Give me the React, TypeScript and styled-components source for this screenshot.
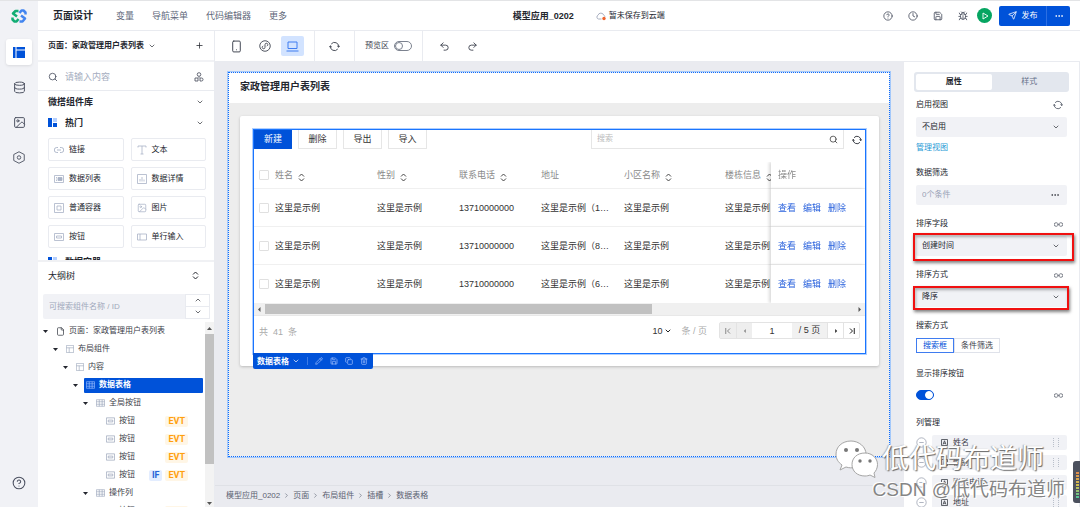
import React from 'react';
import styled, { createGlobalStyle, css } from 'styled-components';
import {
  Bug, ChevronDown, ChevronUp, CircleHelp, Clock, Copy, Database, Ellipsis, File,
  Image, Pencil, Plus, Redo2, Save, Search, Send, Smartphone, Trash2, Undo2,
} from 'lucide-react';

const color = {
  blue: '#0052d9',
  ink: '#23262e',
  text: '#3c4049',
  line: '#e9ebf0',
  field: '#f1f2f6',
  canvas: '#eaebf0',
};

const GlobalStyle = createGlobalStyle`
  *, *::before, *::after { box-sizing: border-box; }
  body {
    margin: 0;
    font-family: "Liberation Sans", "Noto Sans CJK SC", sans-serif;
    font-size: 8px;
    line-height: 12px;
    color: ${color.ink};
  }
  button, input, select { font: inherit; color: inherit; margin: 0; padding: 0; }
  button { border: 0; background: none; cursor: pointer; }
  svg { display: block; flex: none; }
  a { text-decoration: none; }
`;

/* ---------- shell ---------- */

const Shell = styled.div`
  position: relative;
  display: flex;
  height: 100vh;
  overflow: hidden;
  background: #fff;
  border-top: 1px solid #e3e4e6;
`;

const Rail = styled.nav`
  flex: none;
  width: 38px;
  display: flex;
  flex-direction: column;
  align-items: center;
  gap: 9px;
  padding: 6px 0 11px;
  background: ${color.field};
`;

const Logo = styled.div`
  height: 18px;
  margin-bottom: 5px;
  display: flex;
  align-items: center;
`;

const RailButton = styled.button<{ $active?: boolean; $last?: boolean }>`
  width: 26px;
  height: 26px;
  display: grid;
  place-items: center;
  border-radius: 3px;
  color: #4b5060;
  ${(p) => p.$active && css`background: #fff; box-shadow: 0 1px 3px rgba(0, 0, 0, 0.1); color: ${color.blue};`}
  ${(p) => p.$last && css`margin-top: auto;`}
`;

const Main = styled.div`
  flex: 1;
  min-width: 0;
  display: flex;
  flex-direction: column;
`;

const Row = styled.div`
  flex: 1;
  min-height: 0;
  display: flex;
`;

const Column = styled.div`
  flex: 1;
  min-width: 0;
  display: flex;
  flex-direction: column;
`;

/* ---------- header ---------- */

const Header = styled.header`
  flex: none;
  height: 30px;
  display: grid;
  grid-template-columns: 8fr auto 7fr;
  align-items: center;
  border-bottom: 1px solid ${color.line};
  white-space: nowrap;
`;

const Menu = styled.nav`
  display: flex;
  align-items: center;
  gap: 18px;
  padding-left: 15px;
  font-size: 9px;
`;

const MenuTitle = styled.h1`
  margin: 0 5px 0 0;
  font-size: 10px;
  line-height: 12px;
`;

const MenuLink = styled.a`
  color: #5d6678;
`;

const AppState = styled.div`
  display: flex;
  align-items: center;
  gap: 3px;
`;

const AppName = styled.strong`
  margin-right: 19px;
  font-size: 9px;
`;

const HeaderTools = styled.div`
  display: flex;
  align-items: center;
  justify-content: flex-end;
  padding-right: 10px;
  color: #4b5060;
`;

const ToolButton = styled.button`
  width: 25px;
  height: 20px;
  display: grid;
  place-items: center;
`;

const PlayButton = styled.button`
  width: 15px;
  height: 15px;
  margin: 0 7px 0 2px;
  display: grid;
  place-items: center;
  border-radius: 50%;
  background: #06a561;
`;

const Publish = styled.div`
  display: flex;
  height: 20px;
  border-radius: 2px;
  overflow: hidden;
  background: ${color.blue};
  color: #fff;
`;

const PublishButton = styled.button`
  width: 48px;
  display: flex;
  align-items: center;
  justify-content: center;
  gap: 5px;
  border-right: 1px solid #2c6fe2;
`;

const PublishMore = styled.button`
  width: 23px;
  display: grid;
  place-items: center;
`;

/* ---------- left panel ---------- */

const LeftPanel = styled.aside`
  flex: none;
  width: 177px;
  display: flex;
  flex-direction: column;
  border-right: 1px solid ${color.line};
`;

const PageBar = styled.div`
  flex: none;
  height: 31px;
  display: flex;
  align-items: center;
  gap: 4px;
  padding: 0 10px;
  border-bottom: 2px solid #f1f2f5;
  font-weight: bold;

  button { margin-left: auto; }
`;

const SearchBar = styled.label`
  flex: none;
  height: 29px;
  display: flex;
  align-items: center;
  gap: 7px;
  padding: 2px 10px 0;
  border-bottom: 1px solid ${color.line};
  color: #4b5060;

  input {
    flex: 1;
    min-width: 0;
    border: 0;
    outline: 0;
    font-size: 9px;
    background: none;
  }
  input::placeholder { color: #a5adc0; }
`;

const Library = styled.section`
  flex: none;
  height: 171px;
  overflow: hidden;
  border-bottom: 2px solid #f0f1f4;
`;

const GroupHead = styled.button`
  width: 100%;
  height: 21px;
  display: flex;
  align-items: center;
  gap: 8px;
  padding: 0 10px;
  font-size: 9px;
  font-weight: bold;

  > :last-child { margin-left: auto; }
`;

const WidgetGrid = styled.div`
  display: grid;
  grid-template-columns: 1fr 1fr;
  gap: 6px 7px;
  padding: 5px 8px 3px 10px;
`;

const Widget = styled.button`
  height: 23px;
  display: flex;
  align-items: center;
  gap: 5px;
  padding: 0 6px 0 5px;
  border: 1px solid ${color.line};
  border-radius: 2px;
  color: ${color.ink};
  white-space: nowrap;

  svg { color: #a9b3c6; }
`;

const Outline = styled.section`
  flex: 1;
  min-height: 0;
  display: flex;
  flex-direction: column;
`;

const OutlineHead = styled.div`
  flex: none;
  height: 32px;
  display: flex;
  align-items: center;
  justify-content: space-between;
  padding: 0 15px 5px 10px;
  font-size: 9px;
`;

const OutlineSearch = styled.div`
  flex: none;
  display: flex;
  height: 25px;
  margin: 0 4px 3px 5px;

  input {
    flex: 1;
    min-width: 0;
    padding: 0 6px;
    border: 0;
    border-radius: 2px 0 0 2px;
    outline: 0;
    background: ${color.field};
  }
  input::placeholder { color: #a0a8bb; }
`;

const Stepper = styled.div`
  width: 25px;
  display: grid;
  grid-template-rows: 1fr 1fr;

  button {
    display: grid;
    place-items: center;
    border: 1px solid ${color.line};
  }
  button + button { border-top: 0; }
`;

const TreeArea = styled.div`
  flex: 1;
  min-height: 0;
  display: flex;
`;

const Tree = styled.ul`
  flex: 1;
  min-width: 0;
  margin: 0;
  padding: 0 2px 0 5px;
  overflow: hidden;
  list-style: none;
`;

const TreeRow = styled.li<{ $level: number }>`
  height: 18px;
  display: flex;
  align-items: center;
  padding-left: ${(p) => p.$level * 10}px;
`;

const Caret = styled.span<{ $hidden?: boolean }>`
  width: 11px;
  display: flex;
  visibility: ${(p) => (p.$hidden ? 'hidden' : 'visible')};
`;

const TreeLabel = styled.span<{ $selected?: boolean }>`
  flex: 1;
  height: 15px;
  display: flex;
  align-items: center;
  gap: 4px;
  padding: 0 15px 0 2px;
  color: ${color.text};
  white-space: nowrap;

  svg { color: #9aa5ba; }
  ${(p) => p.$selected && css`
    background: ${color.blue};
    color: #fff;
    font-weight: bold;
    border-radius: 1px;
    svg { color: #9dc0ff; }
  `}
`;

const Badges = styled.span`
  display: flex;
  gap: 3px;
  margin-left: auto;
`;

const Badge = styled.span<{ $tone: 'evt' | 'if' }>`
  height: 11px;
  line-height: 11px;
  padding: 0 3px;
  border-radius: 2px;
  font-family: Roboto, "Liberation Sans", sans-serif;
  font-size: 9px;
  font-weight: bold;
  color: ${(p) => (p.$tone === 'evt' ? '#ff9f0f' : '#2463d8')};
  background: ${(p) => (p.$tone === 'evt' ? '#fff6e6' : '#e3edff')};
`;

const VerticalBar = styled.div`
  flex: none;
  width: 9px;
  display: flex;
  flex-direction: column;
  align-items: center;
  justify-content: space-between;
  padding: 4px 0 1px;
  background: #f3f3f3;
  color: #555;
`;

const VerticalThumb = styled.div`
  width: 100%;
  height: 72%;
  margin-bottom: auto;
  margin-top: 3px;
  background: #c1c1c1;
`;

/* ---------- canvas toolbar ---------- */

const Toolbar = styled.div`
  flex: none;
  height: 31px;
  display: flex;
  border-bottom: 1px solid ${color.line};
`;

const ToolGroup = styled.div<{ $tight?: boolean; $last?: boolean }>`
  display: flex;
  align-items: center;
  gap: 5px;
  padding: 0 ${(p) => (p.$tight ? 8 : 10)}px;
  border-right: ${(p) => (p.$last ? '0' : `1px solid ${color.line}`)};
  color: #3f4450;
`;

const DeviceButton = styled.button<{ $active?: boolean }>`
  width: 23px;
  height: 20px;
  display: grid;
  place-items: center;
  border-radius: 2px;
  background: ${(p) => (p.$active ? '#d2e3ff' : 'transparent')};
  color: ${(p) => (p.$active ? '#3f7cf0' : 'inherit')};
`;

const SwitchLabel = styled.label`
  display: flex;
  align-items: center;
  gap: 5px;
`;

const Switch = styled.input`
  appearance: none;
  width: 18px;
  height: 10px;
  display: flex;
  align-items: center;
  border-radius: 5px;
  background: #fff;
  border: 1px solid #7c828f;

  &::before {
    content: '';
    width: 8px;
    height: 8px;
    border: 1px solid #7c828f;
    border-radius: 50%;
    background: #fff;
  }
  &:checked { background: ${color.blue}; border-color: ${color.blue}; justify-content: flex-end; }
  &:checked::before { border-color: #fff; }
`;

/* ---------- canvas ---------- */

const CanvasArea = styled.main`
  flex: 1;
  min-width: 0;
  display: flex;
  flex-direction: column;
  background: ${color.canvas};
`;

const Stage = styled.div`
  flex: 1;
  min-height: 0;
  display: flex;
  padding: 10px 14px 28px 13px;
`;

const PageFrame = styled.section`
  flex: 1;
  min-width: 0;
  border: 1px dotted #0a6cff;
  outline: 1px solid #a3c8fb;
  background: #ededed;
  background-clip: padding-box;
`;

const PageTitle = styled.h2`
  margin: 0;
  padding: 0 11px 2px;
  font-size: 10px;
  line-height: 28px;
  background: #fff;
`;

const Card = styled.div`
  margin: 13px 10px 0 11px;
  padding: 13px 13px 12px;
  border-radius: 2px;
  background: #fff;
  box-shadow: 0 1px 3px rgba(0, 0, 0, 0.22);
`;

const TableBlock = styled.div`
  position: relative;
  border: 1px solid #1a75ff;
  box-shadow: 0 0 0 1px rgba(26, 117, 255, 0.35);
  font-size: 9px;
`;

const TableActions = styled.div`
  display: flex;
  height: 19px;
  gap: 6px;
  margin-bottom: 13px;
`;

const ActionButton = styled.button<{ $primary?: boolean }>`
  width: 39px;
  border: 1px solid #e6e6e6;
  border-top: 0;
  border-radius: 0 0 1px 1px;
  color: #333;
  ${(p) => p.$primary && css`width: 38px; background: ${color.blue}; border-color: ${color.blue}; color: #fff;`}
`;

const TableSearch = styled.label`
  width: 253px;
  margin-left: auto;
  display: flex;
  align-items: center;
  padding: 0 5px;
  border: 1px solid #e6e6e6;
  border-top: 0;

  input {
    flex: 1;
    min-width: 0;
    border: 0;
    outline: 0;
    font-size: 8px;
  }
  input::placeholder { color: #bbb; }
`;

const RefreshButton = styled.button`
  width: 14px;
  margin: 0 1px 0 -6px;
  display: grid;
  place-items: center;

  && { margin-left: 0; }
`;

const TableScroller = styled.div`
  overflow: hidden;
`;

const DataTable = styled.table`
  width: 928px;
  table-layout: fixed;
  border-collapse: separate;
  border-spacing: 0;

  th, td {
    padding: 0;
    text-align: left;
    font-weight: normal;
    white-space: nowrap;
    border-bottom: 1px solid #f0f0f0;
    background: #fff;
  }
  th { height: 27px; color: #8a8a8a; }
  td { height: 38px; color: #333; }
  tbody tr:last-child td { border-bottom: 0; }
  th:last-child, td:last-child {
    position: sticky;
    right: 0;
    padding-left: 7px;
    box-shadow: -2px 0 3px rgba(0, 0, 0, 0.14);
  }
`;

const SortHead = styled.span`
  display: flex;
  align-items: center;
  gap: 5px;

  svg { margin-top: 5px; color: #444; }
`;

const Check = styled.input`
  appearance: none;
  display: block;
  width: 10px;
  height: 10px;
  && { margin-left: 5px; }
  border: 1px solid #e0e0e0;
  border-radius: 1px;
`;

const RowLinks = styled.span`
  display: flex;
  gap: 7px;

  a { color: #2b63dd; }
`;

const HorizontalBar = styled.div`
  height: 13px;
  display: flex;
  align-items: center;
  justify-content: space-between;
  padding: 0 3px;
  background: #f0f0f0;
  border-bottom: 1px solid #e8e8e8;
  color: #555;
`;

const HorizontalThumb = styled.div`
  width: 64%;
  height: 10px;
  margin-right: auto;
  margin-left: 3px;
  background: #c1c1c1;
`;

const TableFooter = styled.div`
  height: 37px;
  display: flex;
  align-items: flex-start;
  padding: 6px 5px 0;
  color: #aaa;
`;

const Total = styled.span`
  margin-right: auto;
  padding-top: 4px;
  white-space: pre;
`;

const PageSize = styled.label`
  display: flex;
  align-items: center;
  height: 17px;
  margin-right: 12px;

  select {
    appearance: none;
    border: 0;
    width: 12px;
    background: none;
    color: #333;
  }
  svg { color: #222; margin-right: 9px; }
`;

const Pager = styled.div`
  display: flex;
  height: 17px;
  border: 1px solid #e3e3e3;
  border-radius: 2px;
  color: #333;

  input {
    width: 40px;
    border: 0;
    text-align: center;
  }
  span {
    width: 35px;
    line-height: 15px;
    text-align: center;
    background: #f1f1f1;
  }
`;

const PagerButton = styled.button`
  width: 16px;
  display: grid;
  place-items: center;
  border-left: 1px solid #e3e3e3;
  color: #222;

  &:first-child { border-left: 0; }
  &:disabled { background: #eee; color: #888; }
`;

const SelectionTag = styled.div`
  position: absolute;
  left: -1px;
  top: 100%;
  height: 16px;
  display: flex;
  align-items: center;
  gap: 7px;
  padding: 0 5px 0 4px;
  border-radius: 0 0 2px 2px;
  background: ${color.blue};
  color: #a9c6ff;
  font-size: 8px;
  white-space: nowrap;

  strong {
    display: flex;
    align-items: center;
    gap: 3px;
    padding-right: 7px;
    border-right: 1px solid #3c7be6;
    line-height: 7px;
    color: #fff;
  }
`;

const Breadcrumb = styled.nav`
  flex: none;
  height: 22px;
  display: flex;
  align-items: center;
  gap: 3px;
  padding: 0 11px 2px;
  border-top: 1px solid #dfe1e6;

  a { color: #5a6170; }
  svg { transform: rotate(-90deg); color: #5a6170; }
`;

/* ---------- right panel ---------- */

const Props = styled.aside`
  flex: none;
  width: 176px;
  overflow: hidden;
  padding: 10px 12px 0;
  background: #fff;
  border-right: 1px solid ${color.line};
`;

const Tabs = styled.div`
  display: grid;
  grid-template-columns: 1fr 1fr;
  height: 20px;
  margin: 0 -2px 7px;
  padding: 2px;
  border-radius: 3px;
  background: #e3e7ee;
`;

const Tab = styled.button<{ $active?: boolean }>`
  border-radius: 2px;
  color: ${(p) => (p.$active ? color.ink : '#66708a')};
  font-weight: ${(p) => (p.$active ? 'bold' : 'normal')};
  background: ${(p) => (p.$active ? '#fff' : 'transparent')};
`;

const Field = styled.div`
  position: relative;
  margin-bottom: 13px;
`;

const FieldHead = styled.div`
  height: 12px;
  display: flex;
  align-items: center;
  justify-content: space-between;
  margin-bottom: 6px;
  padding-right: 4px;

  svg { color: #555b68; }
`;

const SelectBox = styled.div`
  display: flex;
  align-items: center;
  height: 20px;
  padding: 0 7px 0 6px;
  border-radius: 2px;
  background: ${color.field};

  select, input {
    appearance: none;
    flex: 1;
    min-width: 0;
    border: 0;
    outline: 0;
    background: none;
  }
  input::placeholder { color: #98a1b5; }
`;

const ManageLink = styled.a`
  display: block;
  margin-top: 5px;
  color: #1f9ad6;
`;

const Marker = styled.div<{ $wide?: boolean }>`
  position: absolute;
  inset: ${(p) => (p.$wide ? '15px -7px -5px -3px' : '17px -2px -3px -3px')};
  border: 2px solid #f01010;
  box-shadow: 1px 2px 3px rgba(0, 0, 0, 0.5), inset 1px 2px 3px rgba(0, 0, 0, 0.3);
  pointer-events: none;
`;

const Segment = styled.div`
  display: flex;
  height: 17px;
  padding-bottom: 2px;
`;

const SegmentButton = styled.button<{ $active?: boolean }>`
  padding: 0 6px;
  border: 1px solid ${(p) => (p.$active ? '#3f7cf0' : '#dfe2ea')};
  color: ${(p) => (p.$active ? color.blue : color.text)};
`;

const SwitchRow = styled.div`
  display: flex;
  align-items: center;
  justify-content: space-between;
  height: 18px;
  padding-right: 4px;
  color: #555b68;
`;

const ColumnItem = styled.div`
  display: flex;
  align-items: center;
  gap: 5px;
  margin-bottom: 5px;
  color: #9aa0b0;
`;

const ColumnName = styled.div`
  flex: 1;
  display: flex;
  align-items: center;
  gap: 5px;
  height: 15px;
  padding: 0 7px 0 9px;
  border-radius: 2px;
  background: ${color.field};
  color: ${color.text};

  svg:last-child { margin-left: auto; }
`;

/* ---------- overlays ---------- */

const SideWidget = styled.div`
  position: absolute;
  right: 0;
  bottom: 4px;
  width: 7px;
  height: 42px;
  padding: 11px 1px 4px 3px;
  border-radius: 3px 0 0 3px;
  background: #4c515e;

  &::before {
    content: '';
    display: block;
    height: 100%;
    background:
      repeating-linear-gradient(transparent 0 2px, #4c515e 2px 3px),
      linear-gradient(#e08a4a, #cfc050, #45c4a0);
  }
`;

const Signature = styled.div`
  position: absolute;
  right: 15px;
  bottom: 5px;
  display: flex;
  flex-direction: column;
  align-items: flex-end;
  color: #fff;
  white-space: nowrap;
  pointer-events: none;
`;

const SignatureName = styled.div`
  display: flex;
  align-items: center;
  gap: 4px;
  margin-right: 21px;
  font-size: 27px;
  line-height: 36px;
  text-shadow: 1px 1px 1px #666, -1px 0 1px #aaa;
`;

const SignatureSite = styled.div`
  font-size: 19px;
  line-height: 24px;
  color: #858585;
  text-shadow: -1px -1px 0 #fff, 1px 1px 0 #fff;
`;

/* ---------- drawings ---------- */

const Glyph = ({ w = 10, h = 10, box = '0 0 20 20', sw = 1.6, children }: {
  w?: number; h?: number; box?: string; sw?: number; children: React.ReactNode;
}) => (
  <svg width={w} height={h} viewBox={box} fill="none" stroke="currentColor" strokeWidth={sw} aria-hidden="true">
    {children}
  </svg>
);

const LogoMark = () => (
  <svg width="16" height="14" viewBox="0 0 32 28" fill="none" strokeLinejoin="round" aria-hidden="true">
    <path d="M15 4 H9 L4 9 L12 15" stroke="#12ad74" strokeWidth="5" />
    <path d="M3 17 V21 L7 25 H11 L15 20" stroke="#12ad74" strokeWidth="5" />
    <path d="M17 8 L21 3 H25 L29 7 V11" stroke="#4285f0" strokeWidth="5" />
    <path d="M20 13 L28 19 L23 25 H17" stroke="#4285f0" strokeWidth="5" />
  </svg>
);

const LinkIcon = () => (
  <Glyph w={10} h={8} box="0 0 20 16" sw={1.8}>
    <path d="M8 3 H5.5 a4.5 4.5 0 0 0 0 10 H8 M12 3 h2.5 a4.5 4.5 0 0 1 0 10 H12 M6 8 h8" />
  </Glyph>
);
const ChainIcon = () => (
  <Glyph w={9} h={5} box="0 0 18 10" sw={1.6}>
    <path d="M8 3.5 A3.6 3.6 0 0 0 5 1.5 H4 a3.5 3.5 0 0 0 0 7 h1 A3.6 3.6 0 0 0 8 6.5 M10 3.5 A3.6 3.6 0 0 1 13 1.5 h1 a3.5 3.5 0 0 1 0 7 h-1 A3.6 3.6 0 0 1 10 6.5 M6.5 5 H11.5" />
  </Glyph>
);
const TextIcon = () => <Glyph><path d="M2 5 V2 H18 V5 M10 2 V18 M7 18 H13" /></Glyph>;
const ListIcon = () => (
  <Glyph w={10} h={8} box="0 0 20 16"><path d="M1 1 H19 V15 H1 Z M4 5 h2 M4 8 h2 M4 11 h2" /><path d="M8 5 h8 v6 h-8 z" fill="currentColor" /></Glyph>
);
const DetailIcon = () => <Glyph><path d="M1 1 H19 V19 H1 Z M6 10 V15 M10 6 V15 M14 11 V15" /></Glyph>;
const BoxIcon = () => <Glyph><path d="M1 1 H19 V19 H1 Z M6 6 H14 V14 H6 Z" /></Glyph>;
const ButtonIcon = ({ w = 10 }: { w?: number }) => (
  <Glyph w={w} h={8} box="0 0 20 16"><path d="M1 1 H19 V15 H1 Z M5 6 H15 V10 H5 Z" /></Glyph>
);
const InputIcon = () => <Glyph w={10} h={8} box="0 0 20 16"><path d="M1 2 H19 V14 H1 Z M6 2 V14" /></Glyph>;
const LayoutIcon = () => <Glyph w={8} h={8}><path d="M1 1 H19 V19 H1 Z M1 7 H19 M8 7 V19" /></Glyph>;
const GridIcon = () => <Glyph w={9} h={8} box="0 0 22 18"><path d="M1 1 H21 V17 H1 Z M1 6 H21 M1 12 H21 M8 1 V17 M15 1 V17" /></Glyph>;
const PanelIcon = () => (
  <svg width="12" height="11" viewBox="0 0 24 22" fill="currentColor" aria-hidden="true">
    <path d="M0 0 H5 V22 H0 Z M7 0 H24 V5 H7 Z M7 7 H24 V22 H7 Z" />
  </svg>
);
const HotIcon = () => (
  <svg width="9" height="9" viewBox="0 0 18 18" aria-hidden="true">
    <path d="M0 0 H8 V18 H0 Z M10 10 H18 V18 H10 Z" fill="#0052d9" />
    <path d="M10 0 H18 V8 H10 Z" fill="#b5d0ff" />
  </svg>
);
const SharesIcon = () => (
  <Glyph sw={1.7}><circle cx="10" cy="5" r="3.6" /><path d="M10 9 V12 M2 18 V12 H8 V18 Z M12 12 h3 a3 3 0 0 1 0 6 h-3 z" /></Glyph>
);
const MiniAppIcon = () => (
  <Glyph w={12} h={12} box="0 0 24 24" sw={1.8}>
    <circle cx="12" cy="12" r="10.5" />
    <path d="M8.5 12 a2.8 2.8 0 1 0 3.5 2.8 V9.2 a2.8 2.8 0 1 1 3.5 2.8" />
  </Glyph>
);
const LaptopIcon = () => <Glyph w={13} h={11} box="0 0 26 22" sw={2}><path d="M4 2 H22 V15 H4 Z M1 20 H25" /></Glyph>;
const SyncIcon = ({ size = 11 }: { size?: number }) => (
  <Glyph w={size} h={size} box="0 0 22 22" sw={1.9}>
    <path d="M4.5 6 A8.3 8.3 0 0 1 19.3 12 M17.5 16 A8.3 8.3 0 0 1 2.7 10" />
    <path d="M0.5 12.5 L2.7 9.5 L5.5 12 M21.5 9.5 L19.3 12.5 L16.5 10" />
  </Glyph>
);
const CloudIcon = () => (
  <svg width="10" height="10" viewBox="0 0 20 20" fill="none" aria-hidden="true">
    <path d="M11 16 H5 a4 4 0 0 1 -1 -7.5 a6 6 0 0 1 11.5 0 a4 4 0 0 1 2.5 3" stroke="#8c96ac" strokeWidth="1.5" />
    <circle cx="16" cy="15" r="3.4" fill="#f0642d" />
  </svg>
);
const SortIcon = () => <Glyph w={7} h={9} box="0 0 14 18" sw={2}><path d="M2 7 L7 2 L12 7 M2 11 L7 16 L12 11" /></Glyph>;
const NutIcon = () => (
  <Glyph w={12} h={13} box="0 0 24 26" sw={1.8}><path d="M12 1.5 L22.5 7 V19 L12 24.5 L1.5 19 V7 Z" /><circle cx="12" cy="13" r="3.5" /></Glyph>
);
const Triangle = ({ d, size = 5 }: { d: string; size?: number }) => (
  <svg width={size} height={size} viewBox="0 0 10 10" fill="currentColor" aria-hidden="true"><path d={d} /></svg>
);
const down = 'M0 2 H10 L5 8 Z';
const up = 'M0 8 H10 L5 2 Z';
const left = 'M7 0 V10 L2 5 Z';
const right = 'M3 0 V10 L8 5 Z';
const EdgeIcon = ({ flip }: { flip?: boolean }) => (
  <Glyph w={6} h={6} box="0 0 12 12" sw={2}>
    <path d={flip ? 'M2 1 L7 6 L2 11 M10.5 0 V12' : 'M10 1 L5 6 L10 11 M1.5 0 V12'} />
  </Glyph>
);
const MinusIcon = () => <Glyph w={11} h={11} sw={1.4}><circle cx="10" cy="10" r="8.5" /><path d="M6 10 H14" /></Glyph>;
const TypeIcon = () => <Glyph w={7} h={7} box="0 0 14 14" sw={1.6}><path d="M1 1 H13 V13 H1 Z M4 11 L7 3.5 L10 11 M5 8.5 H9" /></Glyph>;
const GripIcon = () => (
  <svg width="7" height="9" viewBox="0 0 7 9" fill="#b9bfca" aria-hidden="true">
    <path d="M0 0h1v1H0z M0 2h1v1H0z M0 4h1v1H0z M0 6h1v1H0z M0 8h1v1H0z M5 0h1v1H5z M5 2h1v1H5z M5 4h1v1H5z M5 6h1v1H5z M5 8h1v1H5z" />
  </svg>
);
const ChatMark = () => (
  <svg width="43" height="38" viewBox="0 0 43 38" aria-hidden="true">
    <g stroke="#a5a5a5" strokeWidth="1" fill="#fff">
      <path d="M16 1 C7 1 1 7 1 14 c0 5 2 8 6 11 l-2 5 l6 -3 c3 1 6 1 9 0.5 C31 26 31 19 31 14 C31 7 24 1 16 1 Z" />
      <path d="M30 13 c-8 0 -13 5 -13 11.5 S22 36 30 36 c2 0 4 -0.5 5 -1 l5 2.5 l-1 -4.5 c2 -2 3.5 -5 3.5 -8.5 C42.5 18 37 13 30 13 Z" />
    </g>
    <g fill="#777"><circle cx="11" cy="10" r="2" /><circle cx="22" cy="10" r="2" /><circle cx="25" cy="21" r="1.7" /><circle cx="35" cy="21" r="1.7" /></g>
  </svg>
);

/* ---------- data ---------- */

const widgets: [string, React.ReactNode][] = [
  ['链接', <LinkIcon />], ['文本', <TextIcon />],
  ['数据列表', <ListIcon />], ['数据详情', <DetailIcon />],
  ['普通容器', <BoxIcon />], ['图片', <Image size={10} strokeWidth={1.8} />],
  ['按钮', <ButtonIcon />], ['单行输入', <InputIcon />],
];

type TreeNode = {
  level: number;
  label: string;
  kind: 'page' | 'layout' | 'grid' | 'button';
  tags?: ('if' | 'evt')[];
  selected?: boolean;
};
const nodes: TreeNode[] = [
  { level: 0, label: '页面：家政管理用户表列表', kind: 'page' },
  { level: 1, label: '布局组件', kind: 'layout' },
  { level: 2, label: '内容', kind: 'layout' },
  { level: 3, label: '数据表格', kind: 'grid', selected: true },
  { level: 4, label: '全局按钮', kind: 'grid' },
  { level: 5, label: '按钮', kind: 'button', tags: ['evt'] },
  { level: 5, label: '按钮', kind: 'button', tags: ['evt'] },
  { level: 5, label: '按钮', kind: 'button', tags: ['evt'] },
  { level: 5, label: '按钮', kind: 'button', tags: ['if', 'evt'] },
  { level: 4, label: '操作列', kind: 'grid' },
  { level: 5, label: '按钮', kind: 'button', tags: ['evt'] },
];
const nodeIcon = {
  page: <File size={9} color="#3c4049" />,
  layout: <LayoutIcon />,
  grid: <GridIcon />,
  button: <ButtonIcon w={9} />,
};

const columns: [string, number, boolean][] = [
  ['姓名', 102, true], ['性别', 82, true], ['联系电话', 82, true], ['地址', 83, false],
  ['小区名称', 101, true], ['楼栋信息', 102, true],
];
const addresses = ['这里是示例（1…', '这里是示例（8…', '这里是示例（6…'];
const fields = ['姓名', '性别', '联系电话', '地址'];
const crumbs = ['模型应用_0202', '页面', '布局组件', '插槽', '数据表格'];

/* ---------- page ---------- */

const LeftSide = () => (
  <LeftPanel>
    <PageBar>
      <span>页面：家政管理用户表列表</span>
      <ChevronDown size={8} />
      <button aria-label="新建页面"><Plus size={9} /></button>
    </PageBar>
    <SearchBar>
      <Search size={10} />
      <input placeholder="请输入内容" aria-label="搜索组件" />
      <SharesIcon />
    </SearchBar>
    <Library>
      <GroupHead>微搭组件库<ChevronDown size={8} /></GroupHead>
      <GroupHead><HotIcon />热门<ChevronDown size={8} /></GroupHead>
      <WidgetGrid>
        {widgets.map(([name, icon]) => <Widget key={name}>{icon}{name}</Widget>)}
      </WidgetGrid>
      <GroupHead><HotIcon />数据容器<ChevronDown size={8} /></GroupHead>
    </Library>
    <Outline>
      <OutlineHead>大纲树<SortIcon /></OutlineHead>
      <OutlineSearch>
        <input placeholder="可搜索组件名称 / ID" aria-label="搜索大纲" />
        <Stepper>
          <button aria-label="上一个"><ChevronUp size={8} /></button>
          <button aria-label="下一个"><ChevronDown size={8} /></button>
        </Stepper>
      </OutlineSearch>
      <TreeArea>
        <Tree>
          {nodes.map((n, i) => (
            <TreeRow key={i} $level={n.level}>
              <Caret $hidden={n.kind === 'button'}><Triangle d={down} /></Caret>
              <TreeLabel $selected={n.selected}>
                {nodeIcon[n.kind]}
                {n.label}
                {n.tags && <Badges>{n.tags.map((t) => <Badge key={t} $tone={t}>{t.toUpperCase()}</Badge>)}</Badges>}
              </TreeLabel>
            </TreeRow>
          ))}
        </Tree>
        <VerticalBar>
          <Triangle d={up} />
          <VerticalThumb />
          <Triangle d={down} />
        </VerticalBar>
      </TreeArea>
    </Outline>
  </LeftPanel>
);

const Designer = () => (
  <CanvasArea>
    <Stage>
      <PageFrame>
        <PageTitle>家政管理用户表列表</PageTitle>
        <Card>
          <TableBlock>
            <TableActions>
              <ActionButton $primary>新建</ActionButton>
              <ActionButton>删除</ActionButton>
              <ActionButton>导出</ActionButton>
              <ActionButton>导入</ActionButton>
              <TableSearch>
                <input placeholder="搜索" aria-label="搜索" />
                <Search size={9} color="#333" />
              </TableSearch>
              <RefreshButton aria-label="刷新"><SyncIcon size={10} /></RefreshButton>
            </TableActions>
            <TableScroller>
              <DataTable>
                <colgroup>
                  <col width="21" />
                  {columns.map(([name, width]) => <col key={name} width={width} />)}
                  <col />
                  <col width="94" />
                </colgroup>
                <thead>
                  <tr>
                    <th><Check type="checkbox" aria-label="全选" /></th>
                    {columns.map(([name, , sortable]) => (
                      <th key={name}><SortHead>{name}{sortable && <SortIcon />}</SortHead></th>
                    ))}
                    <th />
                    <th>操作</th>
                  </tr>
                </thead>
                <tbody>
                  {addresses.map((address) => (
                    <tr key={address}>
                      <td><Check type="checkbox" aria-label="选择行" /></td>
                      <td>这里是示例</td>
                      <td>这里是示例</td>
                      <td>13710000000</td>
                      <td>{address}</td>
                      <td>这里是示例</td>
                      <td>这里是示例</td>
                      <td />
                      <td><RowLinks><a href="#view">查看</a><a href="#edit">编辑</a><a href="#delete">删除</a></RowLinks></td>
                    </tr>
                  ))}
                </tbody>
              </DataTable>
            </TableScroller>
            <HorizontalBar>
              <Triangle d={left} />
              <HorizontalThumb />
              <Triangle d={right} />
            </HorizontalBar>
            <TableFooter>
              <Total>{'共  41  条'}</Total>
              <PageSize>
                <select aria-label="每页条数"><option>10</option></select>
                <ChevronDown size={8} strokeWidth={3} />
                条 / 页
              </PageSize>
              <Pager>
                <PagerButton disabled aria-label="第一页"><EdgeIcon /></PagerButton>
                <PagerButton disabled aria-label="上一页"><Triangle d={left} size={4} /></PagerButton>
                <input defaultValue="1" aria-label="页码" />
                <span>/ 5 页</span>
                <PagerButton aria-label="下一页"><Triangle d={right} size={4} /></PagerButton>
                <PagerButton aria-label="最后一页"><EdgeIcon flip /></PagerButton>
              </Pager>
            </TableFooter>
            <SelectionTag>
              <strong>数据表格<ChevronDown size={8} /></strong>
              <Pencil size={8} /><Save size={8} /><Copy size={8} /><Trash2 size={8} />
            </SelectionTag>
          </TableBlock>
        </Card>
      </PageFrame>
    </Stage>
    <Breadcrumb>
      {crumbs.map((c, i) => (
        <React.Fragment key={c}>
          {i > 0 && <ChevronDown size={7} />}
          <a href="#crumb">{c}</a>
        </React.Fragment>
      ))}
    </Breadcrumb>
  </CanvasArea>
);

const Properties = () => (
  <Props>
    <Tabs>
      <Tab $active>属性</Tab>
      <Tab>样式</Tab>
    </Tabs>
    <Field>
      <FieldHead><label htmlFor="view">启用视图</label><SyncIcon size={10} /></FieldHead>
      <SelectBox><select id="view"><option>不启用</option></select><ChevronDown size={8} /></SelectBox>
      <ManageLink href="#views">管理视图</ManageLink>
    </Field>
    <Field>
      <FieldHead><label htmlFor="filter">数据筛选</label></FieldHead>
      <SelectBox><input id="filter" placeholder="0个条件" /><Ellipsis size={10} strokeWidth={1.6} /></SelectBox>
    </Field>
    <Field>
      <FieldHead><label htmlFor="sort-field">排序字段</label><ChainIcon /></FieldHead>
      <SelectBox><select id="sort-field"><option>创建时间</option></select><ChevronDown size={8} /></SelectBox>
      <Marker $wide />
    </Field>
    <Field>
      <FieldHead><label htmlFor="sort-order">排序方式</label><ChainIcon /></FieldHead>
      <SelectBox><select id="sort-order"><option>降序</option></select><ChevronDown size={8} /></SelectBox>
      <Marker />
    </Field>
    <Field>
      <FieldHead>搜索方式</FieldHead>
      <Segment>
        <SegmentButton $active>搜索框</SegmentButton>
        <SegmentButton>条件筛选</SegmentButton>
      </Segment>
    </Field>
    <Field>
      <FieldHead><label htmlFor="sort-button">显示排序按钮</label></FieldHead>
      <SwitchRow><Switch id="sort-button" type="checkbox" defaultChecked /><ChainIcon /></SwitchRow>
    </Field>
    <Field>
      <FieldHead>列管理</FieldHead>
      {fields.map((f) => (
        <ColumnItem key={f}>
          <MinusIcon />
          <ColumnName><TypeIcon />{f}<GripIcon /></ColumnName>
        </ColumnItem>
      ))}
    </Field>
  </Props>
);

export default function App() {
  return (
    <>
      <GlobalStyle />
      <Shell>
        <Rail>
          <Logo><LogoMark /></Logo>
          <RailButton $active aria-label="页面"><PanelIcon /></RailButton>
          <RailButton aria-label="数据"><Database size={13} strokeWidth={1.8} /></RailButton>
          <RailButton aria-label="素材"><Image size={13} strokeWidth={1.8} /></RailButton>
          <RailButton aria-label="设置"><NutIcon /></RailButton>
          <RailButton $last aria-label="帮助"><CircleHelp size={14} strokeWidth={1.8} /></RailButton>
        </Rail>
        <Main>
          <Header>
            <Menu>
              <MenuTitle>页面设计</MenuTitle>
              <MenuLink href="#vars">变量</MenuLink>
              <MenuLink href="#nav">导航菜单</MenuLink>
              <MenuLink href="#code">代码编辑器</MenuLink>
              <MenuLink href="#more">更多</MenuLink>
            </Menu>
            <AppState>
              <AppName>模型应用_0202</AppName>
              <CloudIcon />
              <span>暂未保存到云端</span>
            </AppState>
            <HeaderTools>
              <ToolButton aria-label="帮助"><CircleHelp size={10} /></ToolButton>
              <ToolButton aria-label="历史"><Clock size={10} /></ToolButton>
              <ToolButton aria-label="保存"><Save size={10} /></ToolButton>
              <ToolButton aria-label="调试"><Bug size={10} /></ToolButton>
              <PlayButton aria-label="预览">
                <Glyph w={8} h={8} box="0 0 16 16" sw={1.8}><path d="M4 2 L14 8 L4 14 Z" stroke="#fff" /></Glyph>
              </PlayButton>
              <Publish>
                <PublishButton><Send size={9} />发布</PublishButton>
                <PublishMore aria-label="更多"><Ellipsis size={10} /></PublishMore>
              </Publish>
            </HeaderTools>
          </Header>
          <Row>
            <LeftSide />
            <Column>
              <Toolbar>
                <ToolGroup>
                  <DeviceButton aria-label="手机"><Smartphone size={13} strokeWidth={1.8} /></DeviceButton>
                  <DeviceButton aria-label="小程序"><MiniAppIcon /></DeviceButton>
                  <DeviceButton $active aria-label="电脑"><LaptopIcon /></DeviceButton>
                </ToolGroup>
                <ToolGroup $tight>
                  <DeviceButton aria-label="刷新"><SyncIcon /></DeviceButton>
                </ToolGroup>
                <ToolGroup>
                  <SwitchLabel>预览区<Switch type="checkbox" /></SwitchLabel>
                </ToolGroup>
                <ToolGroup $last>
                  <DeviceButton aria-label="撤销"><Undo2 size={11} /></DeviceButton>
                  <DeviceButton aria-label="重做"><Redo2 size={11} /></DeviceButton>
                </ToolGroup>
              </Toolbar>
              <Row>
                <Designer />
                <Properties />
              </Row>
            </Column>
          </Row>
        </Main>
        <Signature>
          <SignatureName><ChatMark />低代码布道师</SignatureName>
          <SignatureSite>CSDN @低代码布道师</SignatureSite>
        </Signature>
        <SideWidget />
      </Shell>
    </>
  );
}
